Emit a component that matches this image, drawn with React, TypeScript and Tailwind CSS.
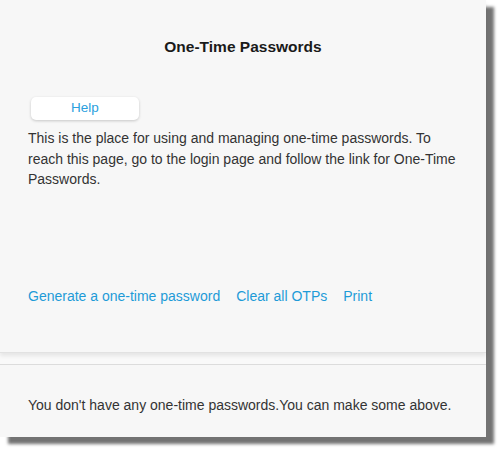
import React from 'react';

const App: React.FC = () => {
  return (
    <div className="w-[500px] h-[452px] bg-white" style={{ fontFamily: '"Liberation Sans", Arial, sans-serif' }}>
      <div className="w-[486px] h-[437px] flex flex-col bg-[#f7f7f7] shadow-[8px_7px_3px_rgba(0,0,0,0.55)]">
        {/* Top panel */}
        <div className="h-[353px] flex flex-col pt-[37px] px-[28px] border-b border-[#e2e2e2] shadow-[0_3px_4px_rgba(0,0,0,0.08)] relative z-10">
          <h1 className="text-center text-[15.5px] leading-[20px] font-bold text-[#1a1a1a]">One-Time Passwords</h1>
          <button className="mt-[40px] ml-[3px] w-[108px] h-[23px] bg-white rounded-[5px] shadow-[0_1px_3px_rgba(0,0,0,0.2)] text-[13.5px] text-[#2a9fde]">
            Help
          </button>
          <p className="mt-[8px] text-[14px] leading-[20.5px] text-[#333]">
            This is the place for using and managing one-time passwords. To reach this page, go to the login page and follow the link for One-Time Passwords.
          </p>
          <div className="mt-auto mb-[46px] flex gap-[16px] text-[14px] leading-[20px] text-[#1e9bd7]">
            <a>Generate a one-time password</a>
            <a>Clear all OTPs</a>
            <a>Print</a>
          </div>
        </div>
        <div className="h-[12px] bg-[#f9f9f9] border-b border-[#dcdcdc]" />
        {/* Bottom panel */}
        <div className="flex-1 px-[28px] pt-[30px]">
          <p className="text-[14px] leading-[20px] text-[#333]">You don't have any one-time passwords.You can make some above.</p>
        </div>
      </div>
    </div>
  );
};

export default App;
